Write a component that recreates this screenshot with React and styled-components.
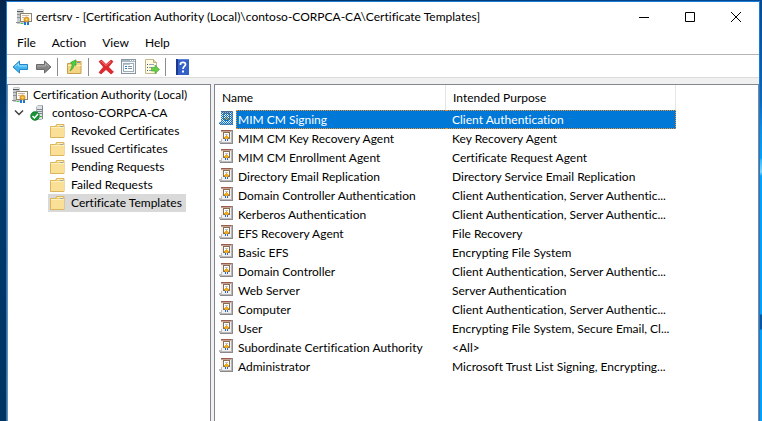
import React from "react";
import styled, { createGlobalStyle, css } from "styled-components";

const GlobalStyle = createGlobalStyle`
  *, *::before, *::after { box-sizing: border-box; }
  html, body { margin: 0; padding: 0; }
  body {
    font: 12px/18px "Segoe UI", Lato, "Open Sans", sans-serif;
    font-variant-ligatures: none;
    color: #000;
  }
  button { font: inherit; color: inherit; }
`;

const Desktop = styled.div`
  min-height: 100vh;
  display: flex;
  padding: 1px 2px 0 6px;
  background:
    linear-gradient(180deg, #064a94 0, #0868c0 100px, #0a90e8 130px, #00a2ff 158px, #30b8ff 160px, #7cd6ff 172px, #00a2ff 176px, #00a2ff 314px, #0458a8 315px, #0458a8 329px, #00a2ff 330px) right / 6px 100% no-repeat,
    linear-gradient(90deg, #04244c 0, #023468 40%, #044a94 100%) top / 100% 2px no-repeat,
    linear-gradient(180deg, #04264e 0, #003a70 120px, #003462 100%);
`;

const Window = styled.div`
  flex: 1;
  min-width: 0;
  display: flex;
  flex-direction: column;
  background: #fff;
  border: 1px solid #1a7ad4;
  border-bottom: 0;
`;

const TitleBar = styled.header`
  display: flex;
  align-items: center;
  height: 30px;
  padding: 0 0 1px 9px;
  gap: 4px;
`;

const Title = styled.h1`
  flex: 1;
  margin: 0;
  font-size: 12px;
  font-weight: 400;
  white-space: nowrap;
`;

const CaptionButtons = styled.div`
  display: flex;
`;

const CaptionButton = styled.button`
  width: 46px;
  height: 28px;
  display: grid;
  place-items: center;
  padding: 0;
  border: 0;
  background: none;
`;

const MenuBar = styled.nav`
  display: flex;
  height: 23px;
  padding: 0 4px;
  gap: 4px;
  border-bottom: 1px solid #b4b4b4;
`;

const MenuItem = styled.button`
  padding: 0 6px;
  border: 0;
  background: none;
  line-height: 22px;
`;

const Toolbar = styled.div`
  display: flex;
  align-items: center;
  height: 23px;
  padding: 1px 0 0 2px;
  border-bottom: 1px solid #dcdcdc;
`;

const ToolButton = styled.button`
  width: 23px;
  height: 20px;
  display: grid;
  place-items: center;
  padding: 0;
  border: 0;
  background: none;
`;

const Separator = styled.span`
  width: 1px;
  height: 18px;
  margin: 0 5px 0 2px;
  background: #8c8c8c;
`;

const Panes = styled.main`
  flex: 1;
  display: grid;
  grid-template-columns: 204px minmax(0, 1fr);
  gap: 3px;
  padding-top: 6px;
  background: #f0f0f0;
`;

const Pane = styled.section`
  min-width: 0;
  background: #fff;
  border: 1px solid #828790;
  border-bottom: 0;
`;

const Tree = styled.ul`
  list-style: none;
  margin: 0;
  padding: 1px 0 0;
`;

const TreeRow = styled.li`
  display: flex;
  align-items: center;
  height: 18px;
  padding-left: ${(p) => [4, 4, 40][p.$level]}px;
`;

const TreeLabel = styled.span`
  display: flex;
  align-items: center;
  height: 18px;
  gap: ${(p) => p.$gap || 6}px;
  padding-right: 4px;
  padding-left: ${(p) => (p.$inset ? 2 : 0)}px;
  white-space: nowrap;
  background: ${(p) => (p.$selected ? "#d9d9d9" : "transparent")};
`;

const Expander = styled.button`
  width: 18px;
  height: 18px;
  display: flex;
  align-items: center;
  padding: 0 0 0 1px;
  border: 0;
  background: none;
`;

const List = styled.table`
  width: 461px;
  table-layout: fixed;
  border-collapse: separate;
  border-spacing: 0;
`;

const HeadCell = styled.th`
  height: 25px;
  padding: 1px 7px 0;
  text-align: left;
  font-weight: 400;
  border-right: 1px solid #e5e5e5;
`;

const selectedCell = css`
  color: #fff;
  background: #0078d7;
  border-top: 1px dotted #f0902c;
  border-bottom: 1px dotted #f0902c;
`;

const IconCell = styled.td`
  height: 19px;
  padding: 1px 0 0 4px;
  vertical-align: top;
  svg { display: block; }
`;

const Cell = styled.td`
  height: 19px;
  padding: 0 0 0 ${(p) => (p.$first ? 2 : 6)}px;
  line-height: 17px;
  white-space: nowrap;
  ${(p) => p.$selected && selectedCell}
  ${(p) => p.$selected && (p.$first ? "border-left: 1px dotted #f0902c; padding-left: 1px;" : "border-right: 1px dotted #f0902c;")}
`;

const AuthorityIcon = () => (
  <svg width="16" height="16" viewBox="0 0 16 16" aria-hidden="true">
    <path d="M1 1l1-1h5l1 1v14H1z" fill="#c6cacc" />
    <path d="M1 2.500h6" stroke="#53595d" />
    <path d="M2 1.500h5" stroke="#e6e9ea" />
    <path d="M1 5.500h3M1 8.500h3" stroke="#8c9498" />
    <path d="M0 13h4v1H0z" fill="#868d91" />
    <rect x="4.500" y="4.500" width="11" height="8" fill="#fffdf6" stroke="#8f8370" />
    <path d="M6 6.500h7M6 8.500h2" stroke="#c9b9ac" />
    <path d="M8 12h2v4H8zM11 12h2v4h-2z" fill="#1f74da" />
    <circle cx="10.500" cy="10.500" r="2.600" fill="#efa42c" stroke="#c8800f" strokeWidth=".6" />
    <circle cx="10.500" cy="10.500" r="1" fill="#ffd964" />
    <path d="M5 14h2v1H5z" fill="#36d43c" />
  </svg>
);

const ServerIcon = () => (
  <svg width="16" height="16" viewBox="0 0 16 16" aria-hidden="true">
    <path d="M6 2l2-2h5v14l-2 1H6z" fill="#aeb6ba" />
    <path d="M7 1h5v13H7z" fill="#dce2e5" />
    <path d="M7 4.500h5M7 6.500h5M7 8.500h5" stroke="#7c878d" />
    <path d="M12 1h1v13h-1z" fill="#7f898e" />
    <path d="M10 11h2v1h-2z" fill="#35b83b" />
    <circle cx="5" cy="11" r="4.400" fill="#169332" stroke="#0c6e22" strokeWidth=".6" />
    <path d="M2.500 11l2 2L8 9" fill="none" stroke="#fff" strokeWidth="1.500" />
  </svg>
);

const FolderIcon = () => (
  <svg width="15" height="14" viewBox="0 0 15 14" aria-hidden="true">
    <path d="M.5 2.500h5l1-2h7.500v13H.5z" fill="#edc768" stroke="#dcb45c" />
    <path d="M7 1.500h6" stroke="#fff1bf" />
    <path d="M1 4h13v9H1z" fill="#fadf97" />
    <path d="M1 3.500h13" stroke="#fff0bd" />
    <path d="M10 2.500h3" stroke="#92a9b3" />
  </svg>
);

const TemplateIcon = ({ selected }) => (
  <svg width="14" height="14" viewBox="0 0 14 14" shapeRendering="crispEdges" aria-hidden="true">
    <path d="M2 0h12v14H2z" fill="#8c8a8c" />
    <path d="M2 0h10v1H2z" fill="#9c5c48" />
    <path d="M2 1h10v1H2z" fill="#c4a298" />
    <path d="M2 2h10v10H2z" fill="#f1f0ef" />
    <path d="M12 1h1v12h-1z" fill="#b8b6b8" />
    <path d="M0 11h2V9h1v3h9v1H0z" fill="#bcbcbe" />
    <path d="M1 13h11v1H1z" fill="#8a888a" />
    <path d="M4 2h7v7H4z" fill="#8b6d50" />
    <path d="M5 3h5v5H5z" fill="#fff" />
    <path d="M6 4h3v1H6z" fill="#b6bfdc" />
    <path d="M7 5h1v1H7zM6 6h3v1H6zM5 7h5v1H5zM6 8h3v1H6z" fill="#eea81c" />
    <path d="M6 9h1v2H6zM8 9h1v2H8z" fill="#2869cc" />
    {selected && (
      <>
        <defs>
          <pattern id="dither" width="2" height="2" patternUnits="userSpaceOnUse">
            <path d="M0 0h1v1H0zM1 1h1v1H1z" fill="#0078d7" />
          </pattern>
        </defs>
        <path d="M2 0h12v14H1l-1-1v-2h2z" fill="url(#dither)" />
      </>
    )}
  </svg>
);

const Arrow = ({ forward }) => (
  <svg width="17" height="14" viewBox="0 0 17 14" aria-hidden="true">
    <g transform={forward ? "matrix(-1 0 0 1 17 0)" : undefined}>
      <path d="M1 7l6.500-6v3.500h8v5h-8V13z" fill={forward ? "#858585" : "#43b5ef"} stroke={forward ? "#6a6a6a" : "#2384c6"} strokeLinejoin="round" />
      <path d="M3 6.500l3.500-3V6H15" fill="none" stroke={forward ? "#b1b1b1" : "#9de1ff"} />
    </g>
  </svg>
);

const UpIcon = () => (
  <svg width="15" height="15" viewBox="0 0 15 15" aria-hidden="true">
    <path d="M.5 4.500h7l1-2h5.500v12H.5z" fill="#f3d482" stroke="#c99f4d" />
    <path d="M1 6.500h13" stroke="#fff0b9" />
    <path d="M10 3.500h3" stroke="#809ba6" />
    <path d="M3 12c2.500-1.500 3.500-3.500 4-6l2 .5L9 .8 3.500 3.500l1.500 1c0 3-.5 5-2 7.500z" fill="#4bd13c" stroke="#2a9a2a" strokeWidth=".6" />
  </svg>
);

const DeleteIcon = () => (
  <svg width="16" height="16" viewBox="0 0 16 16" aria-hidden="true">
    <path d="M1 2.500L3.500 1 8 5.500 13 1l2 1.500L10.500 8l5 5-2.500 2-5-4.500L3 15l-2-1.500L5.500 8z" fill="#e0282c" stroke="#c02028" strokeWidth=".7" />
    <path d="M2.500 3l1-.5L8 6.500l5-4" fill="none" stroke="#f4797a" />
  </svg>
);

const PropertiesIcon = () => (
  <svg width="15" height="15" viewBox="0 0 15 15" aria-hidden="true">
    <rect x=".5" y=".5" width="14" height="14" fill="#f6f8fa" stroke="#8896a4" />
    <path d="M1 2h13" stroke="#a9b7c4" strokeWidth="2" />
    <path d="M9 1.500h1M11 1.500h1M13 1.500h1" stroke="#fff" />
    <rect x="2.500" y="4.500" width="10" height="8" fill="#fff" stroke="#9eadba" />
    <path d="M3 5.500h6" stroke="#bac7d3" />
    <path d="M4 7.500h2M4 9.500h2" stroke="#2b7fd1" />
    <path d="M7 7.500h4M7 9.500h4" stroke="#82909d" />
  </svg>
);

const ExportIcon = () => (
  <svg width="16" height="16" viewBox="0 0 16 16" aria-hidden="true">
    <path d="M1.500.5h8l3 3v11h-11z" fill="#fffbe1" stroke="#c4b98e" />
    <path d="M9.500.5v3h3" fill="#eadfb4" stroke="#b9ad82" />
    <path d="M3 5.500h1M3 8.500h1M3 11.500h1" stroke="#555" />
    <path d="M5 5.500h5M5 8.500h3M5 11.500h3" stroke="#96a0c0" />
    <path d="M7.500 8.500H11V6l4.500 4.500L11 14.500V12H7.500z" fill="#69cb46" stroke="#45ac38" strokeWidth=".7" />
  </svg>
);

const HelpIcon = () => (
  <svg width="13" height="16" viewBox="0 0 13 16" aria-hidden="true">
    <path d="M0 0h13v16H0z" fill="#3560c8" />
    <path d="M0 0h2v16H0z" fill="#1c3790" />
    <path d="M2 0h11v1H2z" fill="#5d84d8" />
    <path d="M4.500 6V4.500C5 3 9.500 2.500 9.500 5.500 9.500 7.500 7 7.500 7 10" fill="none" stroke="#fff" strokeWidth="1.700" />
    <path d="M6 11.500h2v2H6z" fill="#fff" />
  </svg>
);

const CaptionIcon = ({ d }) => (
  <svg width="10" height="10" viewBox="0 0 10 10" aria-hidden="true">
    <path d={d} fill="none" stroke="#000" />
  </svg>
);

const folders = ["Revoked Certificates", "Issued Certificates", "Pending Requests", "Failed Requests", "Certificate Templates"];

const templates = [
  ["MIM CM Signing", "Client Authentication"],
  ["MIM CM Key Recovery Agent", "Key Recovery Agent"],
  ["MIM CM Enrollment Agent", "Certificate Request Agent"],
  ["Directory Email Replication", "Directory Service Email Replication"],
  ["Domain Controller Authentication", "Client Authentication, Server Authentic..."],
  ["Kerberos Authentication", "Client Authentication, Server Authentic..."],
  ["EFS Recovery Agent", "File Recovery"],
  ["Basic EFS", "Encrypting File System"],
  ["Domain Controller", "Client Authentication, Server Authentic..."],
  ["Web Server", "Server Authentication"],
  ["Computer", "Client Authentication, Server Authentic..."],
  ["User", "Encrypting File System, Secure Email, Cl..."],
  ["Subordinate Certification Authority", "<All>"],
  ["Administrator", "Microsoft Trust List Signing, Encrypting..."],
];

export default function App() {
  return (
    <>
      <GlobalStyle />
      <Desktop>
        <Window>
          <TitleBar>
            <AuthorityIcon />
            <Title>certsrv - [Certification Authority (Local)\contoso-CORPCA-CA\Certificate Templates]</Title>
            <CaptionButtons>
              <CaptionButton aria-label="Minimize"><CaptionIcon d="M0 5.500h10" /></CaptionButton>
              <CaptionButton aria-label="Maximize"><CaptionIcon d="M.5.5h9v9h-9z" /></CaptionButton>
              <CaptionButton aria-label="Close"><CaptionIcon d="M0 0l10 10M10 0L0 10" /></CaptionButton>
            </CaptionButtons>
          </TitleBar>
          <MenuBar>
            {["File", "Action", "View", "Help"].map((m) => <MenuItem key={m}>{m}</MenuItem>)}
          </MenuBar>
          <Toolbar role="toolbar">
            <ToolButton aria-label="Back"><Arrow /></ToolButton>
            <ToolButton aria-label="Forward"><Arrow forward /></ToolButton>
            <Separator />
            <ToolButton aria-label="Up one level"><UpIcon /></ToolButton>
            <Separator />
            <ToolButton aria-label="Delete"><DeleteIcon /></ToolButton>
            <ToolButton aria-label="Properties"><PropertiesIcon /></ToolButton>
            <ToolButton aria-label="Export list"><ExportIcon /></ToolButton>
            <Separator />
            <ToolButton aria-label="Help"><HelpIcon /></ToolButton>
          </Toolbar>
          <Panes>
            <Pane>
              <Tree>
                <TreeRow $level={0}>
                  <TreeLabel $gap={5}><AuthorityIcon />Certification Authority (Local)</TreeLabel>
                </TreeRow>
                <TreeRow $level={1}>
                  <Expander aria-label="Collapse">
                    <svg width="12" height="8" viewBox="0 0 12 8" aria-hidden="true">
                      <path d="M2 1.500l4 4 4-4" fill="none" stroke="#404040" strokeWidth="1.500" />
                    </svg>
                  </Expander>
                  <TreeLabel><ServerIcon />contoso-CORPCA-CA</TreeLabel>
                </TreeRow>
                {folders.map((f) => (
                  <TreeRow key={f} $level={2}>
                    <TreeLabel $inset $selected={f === "Certificate Templates"}><FolderIcon />{f}</TreeLabel>
                  </TreeRow>
                ))}
              </Tree>
            </Pane>
            <Pane>
              <List>
                <colgroup>
                  <col width="21" />
                  <col width="210" />
                  <col width="230" />
                </colgroup>
                <thead>
                  <tr>
                    <HeadCell colSpan={2}>Name</HeadCell>
                    <HeadCell>Intended Purpose</HeadCell>
                  </tr>
                </thead>
                <tbody>
                  {templates.map(([name, purpose], i) => (
                    <tr key={name} aria-selected={i === 0}>
                      <IconCell><TemplateIcon selected={i === 0} /></IconCell>
                      <Cell $first $selected={i === 0}>{name}</Cell>
                      <Cell $selected={i === 0}>{purpose}</Cell>
                    </tr>
                  ))}
                </tbody>
              </List>
            </Pane>
          </Panes>
        </Window>
      </Desktop>
    </>
  );
}
